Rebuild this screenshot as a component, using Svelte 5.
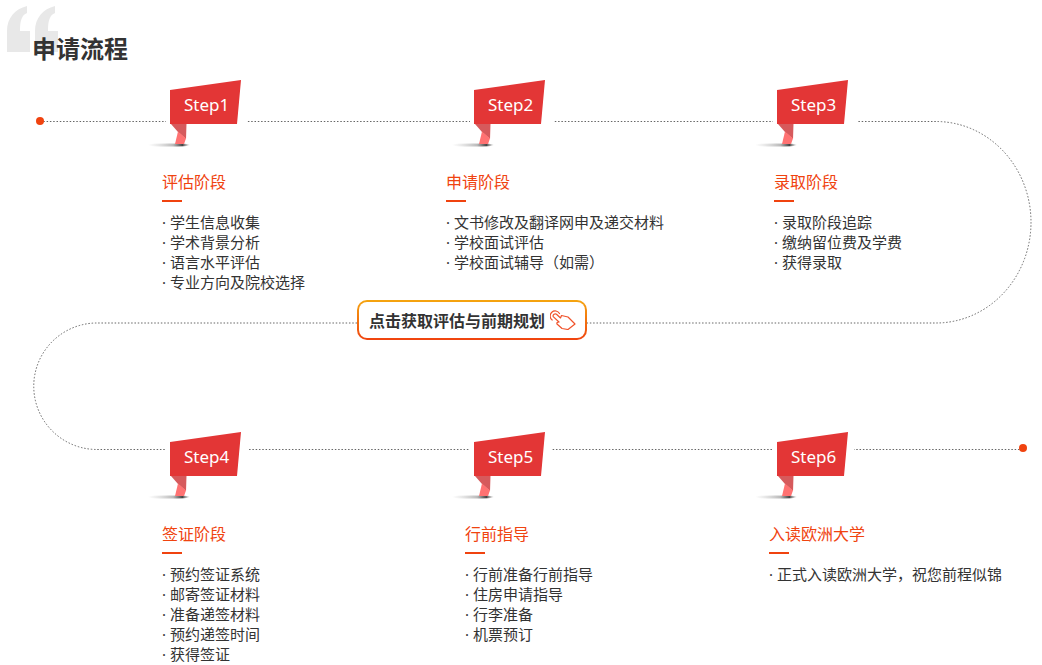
<script>
  // Each step: the flag sits at a fixed column spot, the text block has its own indent.
  const rows = [
    [
      { n: 1, title: "评估阶段", indent: 22, gap: 81, items: ["学生信息收集", "学术背景分析", "语言水平评估", "专业方向及院校选择"] },
      { n: 2, title: "申请阶段", indent: 2, gap: 83, items: ["文书修改及翻译网申及递交材料", "学校面试评估", "学校面试辅导（如需）"] },
      { n: 3, title: "录取阶段", indent: 27, gap: 84, items: ["录取阶段追踪", "缴纳留位费及学费", "获得录取"] },
    ],
    [
      { n: 4, title: "签证阶段", indent: 22, gap: 83, items: ["预约签证系统", "邮寄签证材料", "准备递签材料", "预约递签时间", "获得签证"] },
      { n: 5, title: "行前指导", indent: 21, gap: 81, items: ["行前准备行前指导", "住房申请指导", "行李准备", "机票预订"] },
      { n: 6, title: "入读欧洲大学", indent: 22, gap: 81, items: ["正式入读欧洲大学，祝您前程似锦"] },
    ],
  ];
</script>

<div class="page">
  <svg class="track" width="1042" height="665" viewBox="0 0 1042 665" aria-hidden="true">
    <path d="M40 121.500H936A95 100.750 0 0 1 936 323H97A63.250 63.250 0 0 0 97 449.500H1020" />
    <circle cx="40" cy="121" r="4" />
    <circle cx="1023" cy="448" r="4" />
  </svg>

  <svg class="quote" width="60" height="56" viewBox="0 0 60 56" aria-hidden="true">
    <path d="M7 52V31C7 18 15 9 27 6V13C22 15 20 20 20 31H30V52Z" />
    <path d="M35 52V31C35 18 43 9 55 6V13C50 15 48 20 48 31H58V52Z" />
  </svg>

  <h1>申请流程</h1>

  {#each rows as row, r}
    <div class="row">
      {#each row as step (step.n)}
        <section class="step">
          <div class="flag">
            <svg width="110" height="70" viewBox="0 0 110 70" aria-hidden="true">
              <defs>
                <linearGradient id="shade{step.n}">
                  <stop offset="0" stop-color="#ccc" stop-opacity="0" />
                  <stop offset="0.6" stop-color="#bbb" />
                  <stop offset="0.82" stop-color="#444" />
                  <stop offset="1" stop-color="#888" stop-opacity="0" />
                </linearGradient>
              </defs>
              <rect x="26" y="0" width={step.gap} height="62" fill="#fff" />
              <ellipse cx="29" cy="65" rx="21" ry="1.600" fill="url(#shade{step.n})" />
              <polygon points="30,10 101,0 97,44 30,44" fill="#e33636" />
              <polygon points="31,44 46.500,44 46,59 38,52" fill="#d65a5c" />
              <polygon points="38,51.500 46,58.500 44,64 35,64" fill="#ff7272" />
            </svg>
            <span class="label">Step{step.n}</span>
          </div>
          <div class="body" style="padding-left: {step.indent}px">
            <h2>{step.title}</h2>
            <ul>
              {#each step.items as item}
                <li>· {item}</li>
              {/each}
            </ul>
          </div>
        </section>
      {/each}
    </div>
    {#if r === 0}
      <div class="cta-row">
        <button class="cta">
          点击获取评估与前期规划
          <svg width="26" height="20" viewBox="0 0 26 20" fill="none" stroke="#f0522a" stroke-width="1.200" stroke-linejoin="round" stroke-linecap="round" aria-hidden="true">
            <path d="M2.200 10A5 5 0 1 1 9.500 3.500" />
            <path d="M3.200 6.600L9 12C7.500 12 6.500 12.500 7 14L12 18.500L18 19.500L25 14L18 7L11.500 5.500L10.500 8L6.500 4.200C5 3 2.500 4.800 3.200 6.600Z" />
          </svg>
        </button>
      </div>
    {/if}
  {/each}
</div>

<style>
  :global(body) {
    margin: 0;
    background: #fff;
  }
  .page {
    position: relative;
    width: 1042px;
    height: 665px;
    overflow: hidden;
    font-family: "Noto Sans", "Noto Sans CJK SC", sans-serif;
    color: #333;
  }
  .track {
    position: absolute;
    left: 0;
    top: 0;
  }
  .track path {
    fill: none;
    stroke: #666;
    stroke-width: 1;
    stroke-dasharray: 1.500 1.800;
  }
  .track circle {
    fill: #f0430f;
  }
  .quote {
    position: absolute;
    left: 0;
    top: 0;
    fill: #e8e8e8;
  }
  h1 {
    position: relative;
    margin: 0;
    padding: 33px 0 0 32px;
    height: 47px;
    font-size: 24px;
    line-height: 32px;
    font-weight: 700;
    color: #333;
    box-sizing: content-box;
  }
  .row {
    position: relative;
    display: grid;
    grid-template-columns: 304px 303px 1fr;
    margin-left: 140px;
    height: 220px;
  }
  .flag {
    position: relative;
    width: 110px;
    height: 70px;
  }
  .flag svg {
    display: block;
  }
  .label {
    position: absolute;
    left: 44px;
    top: 13px;
    font-size: 17px;
    line-height: 24px;
    color: #fff;
  }
  .body {
    margin-top: 20px;
  }
  h2 {
    margin: 0 0 10px;
    font-size: 16px;
    line-height: 24px;
    font-weight: 400;
    color: #f0430f;
  }
  h2::after {
    content: "";
    display: block;
    width: 20px;
    height: 2px;
    margin-top: 6px;
    background: #f0430f;
  }
  ul {
    margin: 0;
    padding: 0;
    list-style: none;
  }
  li {
    font-size: 15px;
    line-height: 20px;
    white-space: nowrap;
  }
  .cta-row {
    position: relative;
    height: 132px;
    padding-left: 357px;
    box-sizing: border-box;
  }
  .cta {
    display: flex;
    align-items: center;
    gap: 5px;
    box-sizing: border-box;
    width: 230px;
    height: 40px;
    padding: 0 0 0 10px;
    border: 2px solid transparent;
    border-radius: 10px;
    background:
      linear-gradient(#fff, #fff) padding-box,
      linear-gradient(#f5a50f, #f0430f) border-box;
    font: 700 16px "Noto Sans", "Noto Sans CJK SC", sans-serif;
    color: #333;
    white-space: nowrap;
  }
</style>
